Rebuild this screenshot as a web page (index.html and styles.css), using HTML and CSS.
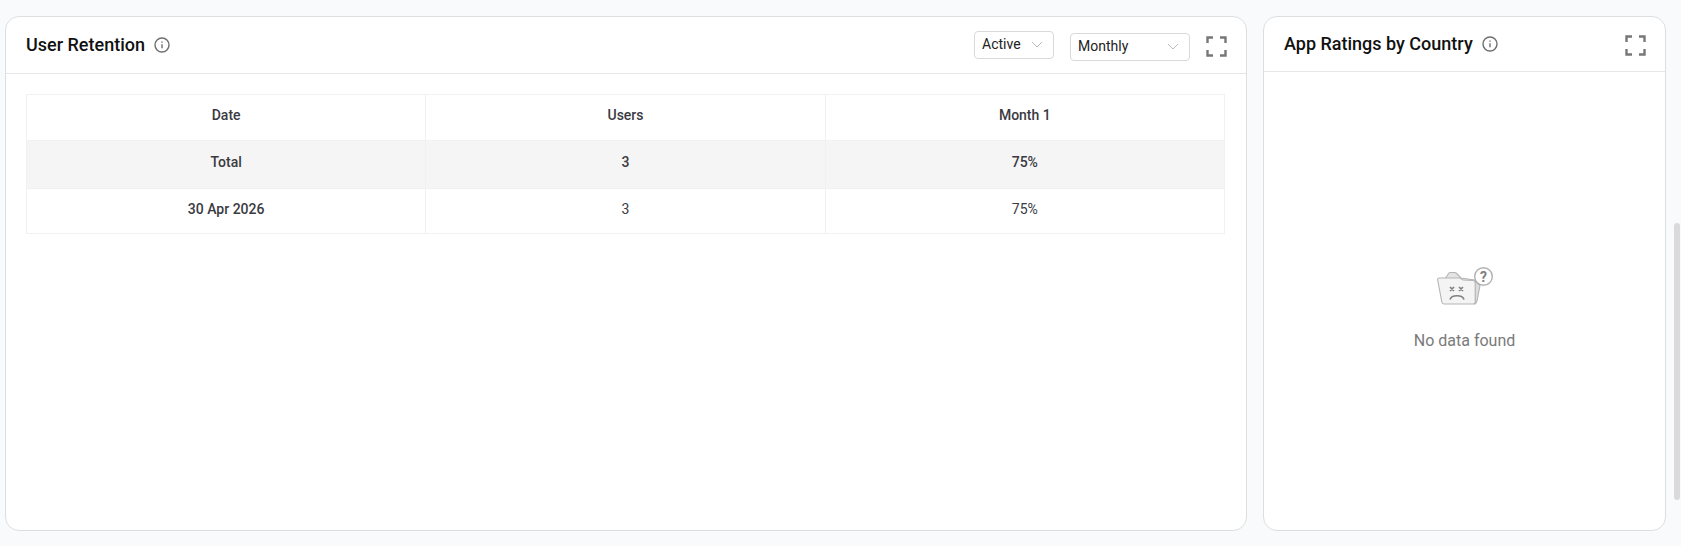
FILE: index.html
```html
<!DOCTYPE html>
<html lang="en">
<head>
    <meta name="viewport" content="width=device-width, initial-scale=1.0">
    <title>Analytics</title>
    <link rel="stylesheet" href="styles.css">
</head>
<body>

    <div class="dashboard">
        <!-- User Retention -->
        <section class="card card-retention">
            <header class="card-header">
                <div class="card-title">
                    <h2>User Retention</h2>
                    <svg class="info-icon" viewBox="0 0 16 16"><circle cx="8" cy="8" r="7"/><path d="M8 7.200v4"/><path d="M8 4.400v1.400"/></svg>
                </div>
                <div class="card-tools">
                    <div class="select select-active">Active<svg class="chevron" viewBox="0 0 12 7"><path d="M1 1l5 5 5-5"/></svg></div>
                    <div class="select select-period">Monthly<svg class="chevron" viewBox="0 0 12 7"><path d="M1 1l5 5 5-5"/></svg></div>
                    <svg class="expand-icon" viewBox="0 0 21 21"><path d="M1.500 7V1.500H7M14 1.500h5.500V7M19.500 14v5.500H14M7 19.500H1.500V14"/></svg>
                </div>
            </header>
            <div class="card-body">
                <table class="retention-table">
                    <thead>
                        <tr class="head-row"><th>Date</th><th>Users</th><th>Month 1</th></tr>
                    </thead>
                    <tbody>
                        <tr class="total-row"><td>Total</td><td>3</td><td>75%</td></tr>
                        <tr class="data-row"><td class="date-cell">30 Apr 2026</td><td>3</td><td>75%</td></tr>
                    </tbody>
                </table>
            </div>
        </section>

        <!-- App Ratings -->
        <section class="card card-ratings">
            <header class="card-header">
                <div class="card-title">
                    <h2>App Ratings by Country</h2>
                    <svg class="info-icon" viewBox="0 0 16 16"><circle cx="8" cy="8" r="7"/><path d="M8 7.200v4"/><path d="M8 4.400v1.400"/></svg>
                </div>
                <svg class="expand-icon" viewBox="0 0 21 21"><path d="M1.500 7V1.500H7M14 1.500h5.500V7M19.500 14v5.500H14M7 19.500H1.500V14"/></svg>
            </header>
            <div class="empty-state">
                <svg class="empty-icon" viewBox="0 0 56 38">
                    <path class="back" d="M37 13l6 5.500-3 15.500c-.3 1.500-1 2.500-2 3z"/>
                    <path class="tab" d="M8 12l3.500-5.500c.6-.8 1.200-1 2-1h4c1 0 1.600.4 2.200 1l4.300 4.500 13 2v3H8z"/>
                    <path class="body" d="M2.200 11h20.800l3 2 10 .5c1.500 0 2.200 1 2.200 2.200V35c0 1.200-.8 2-2 2H7c-1.200 0-2-.8-2.200-2L.7 13c-.2-1.200.3-2 1.500-2z"/>
                    <path class="face" d="M13 20l4 4M17 20l-4 4M22 20l4 4M26 20l-4 4"/>
                    <path class="frown" d="M13 32.500c1.500-5 12.500-5 14 0"/>
                    <circle class="bubble" cx="46.500" cy="9.500" r="8.800"/>
                    <text class="question" x="46.500" y="14.500" text-anchor="middle">?</text>
                </svg>
                <p>No data found</p>
            </div>
        </section>
    </div>

    <div class="scrollbar"><div class="scrollbar-thumb"></div></div>

</body>
</html>
```

FILE: styles.css
```css
/* General Styles */
html, body {
    height: 100%;
}

body {
    font-family: Roboto, sans-serif;
    margin: 0;
    background-color: #f9fafb;
    color: #111;
    overflow: hidden;
}

.dashboard {
    display: flex;
    gap: 16px;
    padding: 16px 15px 15px 5px;
    height: 100%;
    box-sizing: border-box;
}

/* Cards */
.card {
    background-color: #fff;
    border: 1px solid #dcdfe0;
    border-radius: 14px;
    box-sizing: border-box;
    display: flex;
    flex-direction: column;
}

.card-retention {
    width: 1242px;
}

.card-ratings {
    width: 403px;
}

.card-header {
    display: flex;
    align-items: center;
    justify-content: space-between;
    border-bottom: 1px solid #e4e6e8;
    height: 56px;
    padding: 0 19px 0 20px;
    flex-shrink: 0;
}

.card-ratings .card-header {
    height: 54px;
}

.card-title {
    display: flex;
    align-items: center;
    gap: 9px;
}

h2 {
    font-size: 18px;
    font-weight: 500;
    margin: 0 0 2px;
}

.info-icon {
    width: 16px;
    height: 16px;
    fill: none;
    stroke: #6e6e6e;
    stroke-width: 1.400;
}

.expand-icon {
    width: 21px;
    height: 21px;
    margin-top: 2px;
    fill: none;
    stroke: #777;
    stroke-width: 2.400;
}

.card-tools {
    display: flex;
    align-items: center;
    gap: 16px;
}

.select {
    display: flex;
    align-items: center;
    justify-content: space-between;
    height: 28px;
    padding: 0 10px 2px 7px;
    border: 1px solid #d9d9d9;
    border-radius: 4px;
    box-sizing: border-box;
    font-size: 14px;
    color: #222;
}

.select-active {
    width: 80px;
}

.select-period {
    width: 120px;
    margin-top: 4px;
}

.chevron {
    width: 12px;
    height: 7px;
    fill: none;
    stroke: #bbb;
    stroke-width: 1;
}

/* Table */
.card-body {
    padding: 20px 20px 0;
}

.retention-table {
    width: 1199px;
    border-collapse: collapse;
    table-layout: fixed;
    font-size: 14px;
}

.retention-table th,
.retention-table td {
    border: 1px solid #f1f1f1;
    text-align: center;
    padding: 0 0 6px;
    box-sizing: border-box;
    color: #3a3a42;
    font-weight: 400;
}

.head-row th {
    height: 46px;
}

.data-row td {
    height: 45px;
    padding-bottom: 5px;
}

.retention-table th,
.total-row td,
.date-cell {
    font-weight: 500 !important;
}

.total-row td {
    height: 48px;
    background-color: #f5f5f5;
}

/* Empty state */
.empty-state {
    flex-grow: 1;
    display: flex;
    flex-direction: column;
    align-items: center;
    justify-content: center;
    padding-top: 14px;
}

.empty-icon {
    width: 56px;
    height: 38px;
}

.empty-icon .body,
.empty-icon .tab,
.empty-icon .back {
    stroke: #b4b4b4;
    stroke-width: 1.100;
}

.empty-icon .body {
    fill: #f4f4f4;
}

.empty-icon .tab {
    fill: #e4e4e4;
}

.empty-icon .back {
    fill: #dcdcdc;
}

.empty-icon .face,
.empty-icon .frown {
    fill: none;
    stroke: #808080;
    stroke-width: 1.700;
}

.empty-icon .bubble {
    fill: #fff;
    stroke: #b0b0b0;
    stroke-width: 1.400;
}

.empty-icon .question {
    font-family: Roboto, sans-serif;
    font-size: 14px;
    font-weight: 700;
    fill: #808080;
}

.empty-state p {
    margin: 26px 0 0;
    font-size: 16px;
    color: #7a7a7a;
}

/* Scrollbar */
.scrollbar {
    position: absolute;
    top: 0;
    right: 0;
    bottom: 0;
    width: 7px;
}

.scrollbar-thumb {
    position: absolute;
    top: 223px;
    bottom: 46px;
    left: 0;
    right: 1px;
    background-color: #dadada;
    border-radius: 3px;
}
```
